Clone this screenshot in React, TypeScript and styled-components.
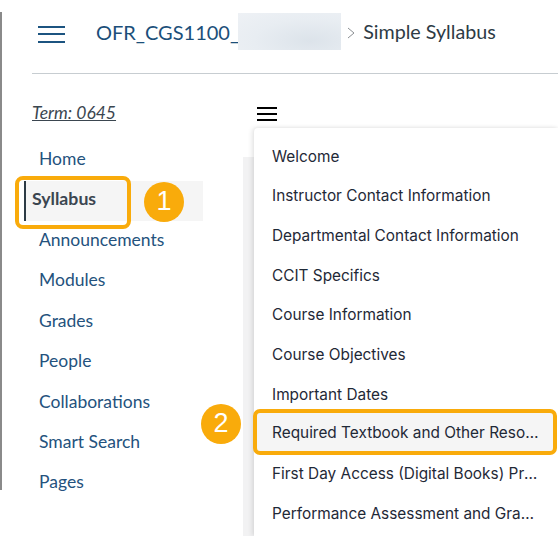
import * as React from 'react'
import styled, { createGlobalStyle } from 'styled-components'

const GlobalStyle = createGlobalStyle`
  html, body {
    margin: 0;
    padding: 0;
    background: #ffffff;
    overflow: hidden;
  }
`

const courseNav = ['Home', 'Syllabus', 'Announcements', 'Modules', 'Grades', 'People', 'Collaborations', 'Smart Search', 'Pages']

const menuItems = [
  'Welcome',
  'Instructor Contact Information',
  'Departmental Contact Information',
  'CCIT Specifics',
  'Course Information',
  'Course Objectives',
  'Important Dates',
  'Required Textbook and Other Resources',
  'First Day Access (Digital Books) Program',
  'Performance Assessment and Grading'
]

const App = () => (
  <Page>
    <GlobalStyle />
    <EdgeLine />
    <Header>
      <Burger>
        <span /><span /><span />
      </Burger>
      <CourseLink>OFR_CGS1100_</CourseLink>
      <BlurredName />
      <Chevron viewBox="0 0 8 12"><path d="M1 1l6 5-6 5" fill="none" stroke="#8b8f93" strokeWidth="1" /></Chevron>
      <Crumb>Simple Syllabus</Crumb>
    </Header>
    <Body>
      <Sidebar>
        <Term>Term: 0645</Term>
        <Nav>
          {courseNav.map(item => (
            <NavItem key={item} $active={item === 'Syllabus'}>
              {item}
              {item === 'Syllabus' && <><NavOutline /><NavBadge>1</NavBadge></>}
            </NavItem>
          ))}
        </Nav>
      </Sidebar>
      <Content>
        <MiniBurger>
          <span /><span /><span />
        </MiniBurger>
        <Shade>
          <Menu>
            {menuItems.map((item, i) => (
              <MenuItem key={item} $active={i === 7}>
                <MenuText>{item}</MenuText>
                {i === 7 && <MenuBadge>2</MenuBadge>}
              </MenuItem>
            ))}
          </Menu>
        </Shade>
      </Content>
    </Body>
  </Page>
)

const Page = styled.div`
  position: relative;
  width: 558px;
  height: 536px;
  overflow: hidden;
  background: #ffffff;
`
const EdgeLine = styled.div`
  position: absolute;
  left: 0;
  top: 12px;
  width: 2px;
  height: 478px;
  background: #8a8a8a;
`
const Header = styled.header`
  display: flex;
  align-items: center;
  height: 74px;
  margin-left: 32px;
  padding: 0 0 10px 6px;
  box-sizing: border-box;
  border-bottom: 1px solid #c7cdd1;
`
const Burger = styled.div`
  display: flex;
  flex-direction: column;
  justify-content: space-between;
  width: 27px;
  height: 17px;
  margin: 5px 31px 0 0;

  span {
    display: block;
    height: 2px;
    background: #1c5480;
  }
`
const CourseLink = styled.span`
  font: 20px/26px Lato, sans-serif;
  color: #1b4f7a;
`
const BlurredName = styled.div`
  width: 103px;
  height: 37px;
  margin-left: -1px;
  background: radial-gradient(ellipse at 70% 75%, #dce3ea 0%, #e8edf2 55%, #eef1f5 100%);
`
const Chevron = styled.svg`
  width: 8px;
  height: 12px;
  margin: 2px 8px 0 6px;
`
const Crumb = styled.span`
  font: 19.7px/26px Lato, sans-serif;
  color: #2d3b45;
`
const Body = styled.div`
  display: flex;
  height: 462px;
`
const Sidebar = styled.aside`
  width: 243px;
  flex: none;
  padding-left: 32px;
  box-sizing: border-box;
`
const Term = styled.div`
  margin-top: 28px;
  font: italic 17.5px/22px Lato, sans-serif;
  color: #3b4650;
  text-decoration: underline;
`
const Nav = styled.nav`
  display: flex;
  flex-direction: column;
  margin: 15px 0 0 -8px;
`
const NavItem = styled.div<{ $active?: boolean }>`
  position: relative;
  display: flex;
  align-items: center;
  width: 179px;
  height: 40.4px;
  box-sizing: border-box;
  padding-left: 15px;
  font: 400 17.5px/24px Lato, sans-serif;
  color: #24527d;

  ${p => p.$active && `
    margin: 1.6px 0 -1.6px;
    padding: 0 0 5px 6px;
    font-weight: 700;
    font-size: 17.7px;
    color: #3b4650;
    background: #f5f5f5;
    border-left: 2px solid #2d3b45;
  `}
`
const NavOutline = styled.span`
  position: absolute;
  left: -11px;
  top: -5px;
  width: 116px;
  height: 53px;
  box-sizing: border-box;
  border: 4.5px solid #f9ab0b;
  border-radius: 8px;
`
const Badge = styled.span`
  position: absolute;
  display: flex;
  align-items: center;
  justify-content: center;
  width: 40px;
  height: 40px;
  border-radius: 50%;
  background: #f9ab0b;
  color: #ffffff;
  font: 400 27px/1 "Liberation Sans", sans-serif;
`
const NavBadge = styled(Badge)`
  left: 118px;
  top: 1px;
`
const Content = styled.main`
  flex: 1;
  min-width: 0;
  display: flex;
  flex-direction: column;
`
const MiniBurger = styled.div`
  display: flex;
  flex-direction: column;
  justify-content: space-between;
  width: 20px;
  height: 14px;
  margin: 33px 0 0 14px;

  span {
    display: block;
    height: 2px;
    background: #000000;
  }
`
const Shade = styled.div`
  flex: 1;
  margin-top: 7px;
  padding-left: 11px;
  background: linear-gradient(to bottom, #ffffff 0, #ffffff 29px, #f2f2f3 29px, #f2f2f3 100%);
`
const Menu = styled.div`
  height: 100%;
  padding-top: 8.9px;
  box-sizing: border-box;
  background: #ffffff;
  border-radius: 4px 0 0 0;
  box-shadow: -2px 0 5px rgba(0, 0, 0, 0.1), 0 -1px 3px rgba(0, 0, 0, 0.04);
`
const MenuItem = styled.div<{ $active?: boolean }>`
  position: relative;
  height: 39.7px;
  display: flex;
  align-items: center;
  padding-left: 18px;
  box-sizing: border-box;

  ${p => p.$active && `
    margin: -1.8px 5px 3.5px 3px;
    height: 38px;
    padding: 2px 0 0 15px;
    background: #f5f5f5;
    border-radius: 3px;
    outline: 4.5px solid #f9ab0b;
  `}
`
const MenuText = styled.span`
  display: block;
  width: 270px;
  white-space: nowrap;
  overflow: hidden;
  text-overflow: ellipsis;
  font: 420 15.38px/20px Inter, sans-serif;
  color: #1f2937;
`
const MenuBadge = styled(Badge)`
  left: -56px;
  top: -9px;
`

export default App
